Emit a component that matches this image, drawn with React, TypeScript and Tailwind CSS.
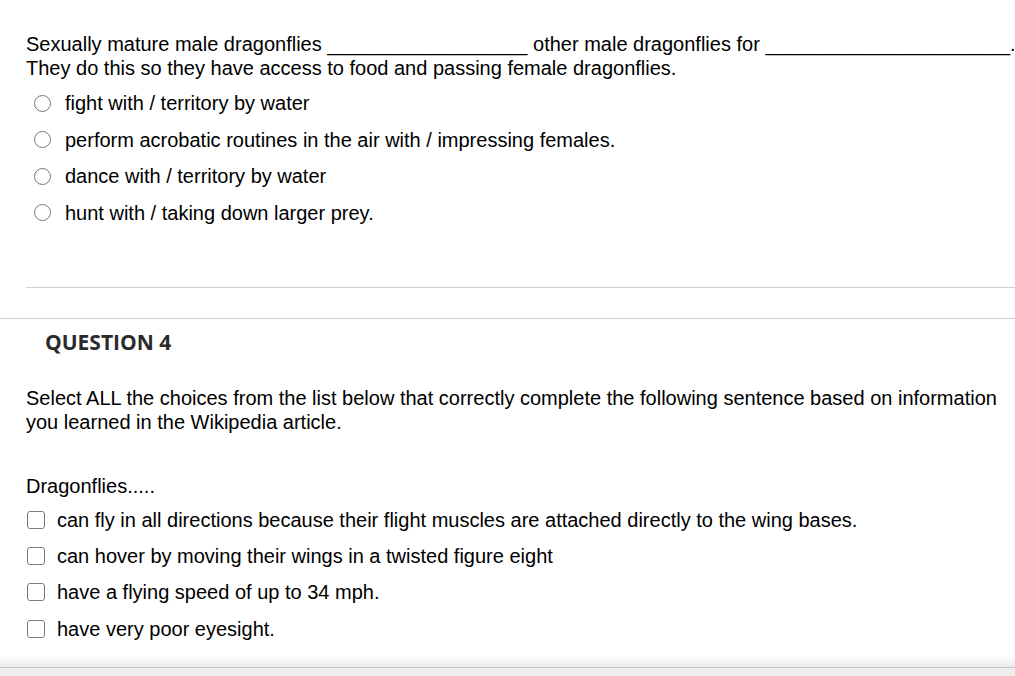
import React from "react";

const radios = [
  "fight with / territory by water",
  "perform acrobatic routines in the air with / impressing females.",
  "dance with / territory by water",
  "hunt with / taking down larger prey.",
];

const checks = [
  "can fly in all directions because their flight muscles are attached directly to the wing bases.",
  "can hover by moving their wings in a twisted figure eight",
  "have a flying speed of up to 34 mph.",
  "have very poor eyesight.",
];

export default function App() {
  return (
    <div
      className="w-[1015px] h-[676px] overflow-hidden bg-white text-black flex flex-col"
      style={{ fontFamily: '"Liberation Sans", Arial, sans-serif' }}
    >
      <div className="pt-[32px] pl-[26px] text-[20px] leading-[24px]">
        <div className="whitespace-nowrap">
          Sexually mature male dragonflies {"__________________"} other male dragonflies for {"______________________"}.
        </div>
        <div>They do this so they have access to food and passing female dragonflies.</div>
        <div className="mt-[4.7px] flex flex-col">
          {radios.map((r) => (
            <div key={r} className="h-[36.67px] flex items-center">
              <div className="ml-[8px] w-[17px] h-[17px] rounded-full border-[1.5px] border-[#767676] bg-white shrink-0" />
              <span className="ml-[14px]">{r}</span>
            </div>
          ))}
        </div>
      </div>
      <div className="ml-[26px] mt-[55.5px] border-t border-[#d0d0d0]" />
      <div className="mt-[30px] border-t border-[#cccccc]" />
      <div
        className="mt-[11px] pl-[45px] text-[21px] leading-[24px] font-bold text-[#2b2b2b]"
        style={{ fontFamily: '"Open Sans", "Noto Sans", sans-serif' }}
      >
        QUESTION 4
      </div>
      <div className="pl-[26px] pr-[16px] text-[20px] leading-[24px]">
        <div className="mt-[32px]">
          Select ALL the choices from the list below that correctly complete the following sentence based on information you learned in the Wikipedia article.
        </div>
        <div className="mt-[40px]">Dragonflies.....</div>
        <div className="mt-[3.8px] flex flex-col">
          {checks.map((c) => (
            <div key={c} className="h-[36.33px] flex items-center">
              <div className="ml-[1px] w-[18px] h-[18px] rounded-[3px] border-[1.5px] border-[#7a7a7a] bg-white shrink-0" />
              <span className="ml-[12px] whitespace-nowrap">{c}</span>
            </div>
          ))}
        </div>
      </div>
      <div className="flex-1" />
      <div className="h-[12px] bg-gradient-to-b from-white to-[#ececec]" />
      <div className="h-[9px] border-t border-[#c8c8c8] bg-[#eeeeee]" />
    </div>
  );
}
